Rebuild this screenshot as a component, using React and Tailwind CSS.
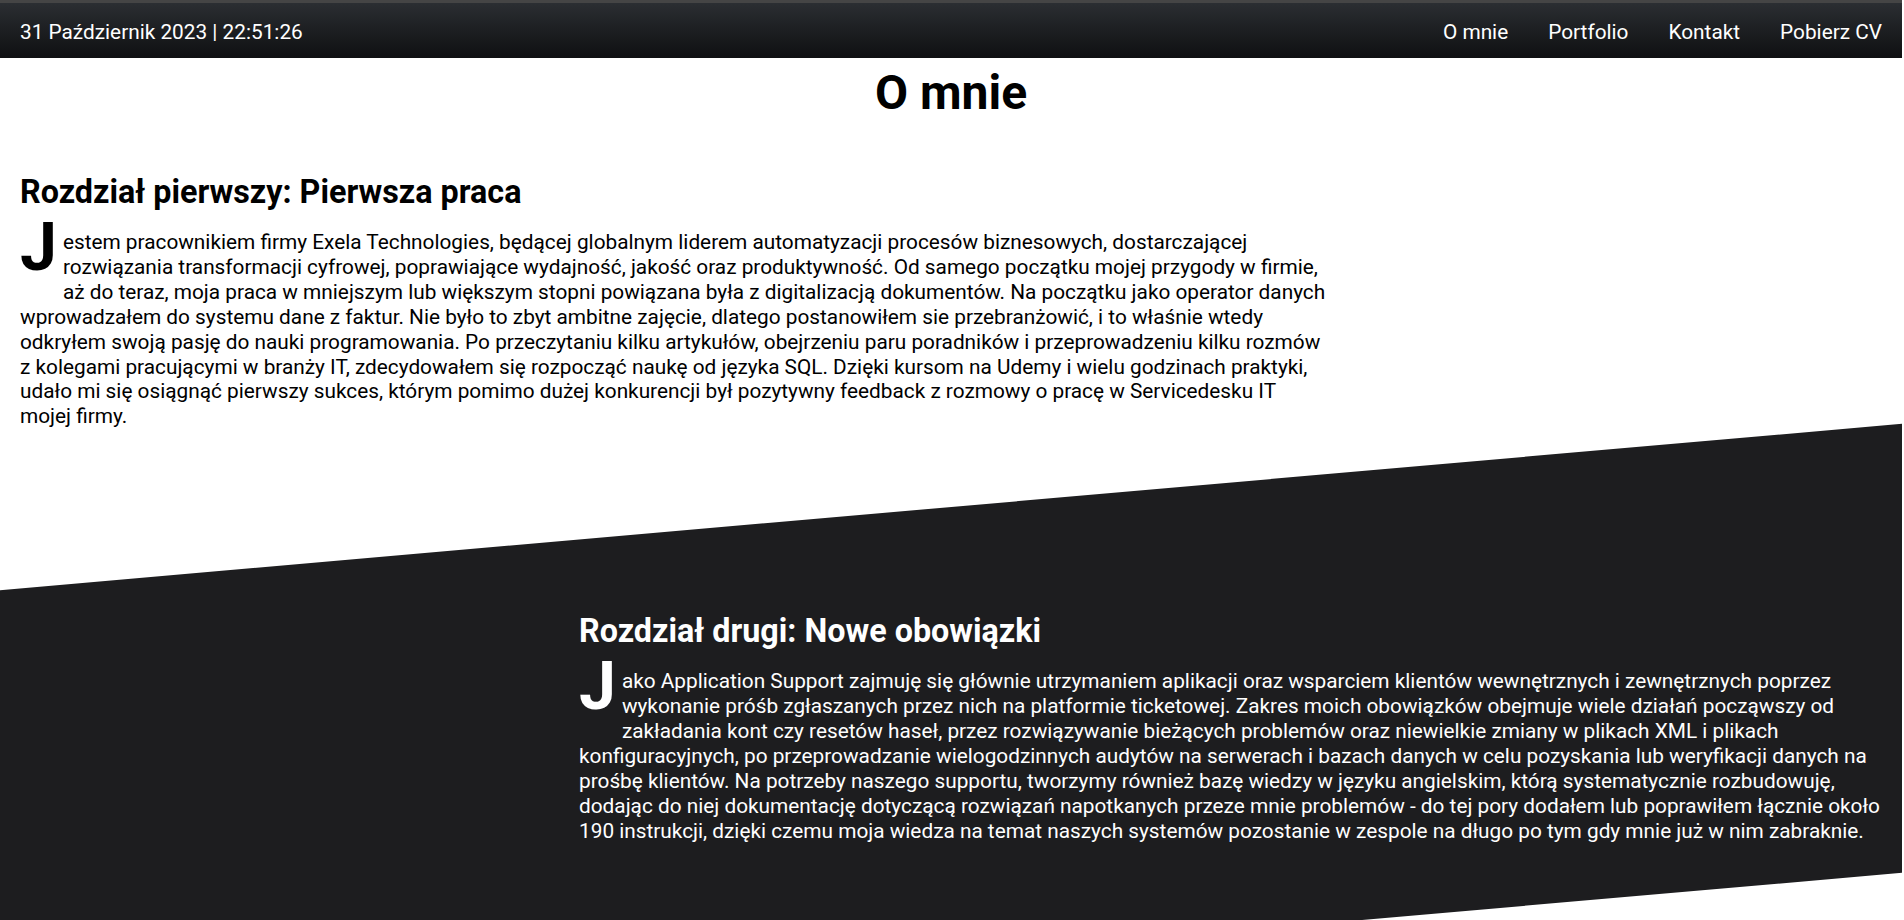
import React from 'react';

const links = ['O mnie', 'Portfolio', 'Kontakt', 'Pobierz CV'];

const DropCap = ({ letter }) => (
  <span className="float-left mr-[6px] pb-[20px] text-[66px] font-bold leading-[35px]">{letter}</span>
);

const Navbar = () => (
  <nav className="flex h-[58px] items-center justify-between border-t-[3px] border-[#454545] bg-linear-to-b from-[#2b2e32] to-[#0f1012] px-5 pt-[3px] text-[20.8px] leading-[28px] text-white">
    <span>31 Październik 2023 | 22:51:26</span>
    <ul className="flex gap-10">
      {links.map((link) => (
        <li key={link}>
          <a href="#">{link}</a>
        </li>
      ))}
    </ul>
  </nav>
);

const App = () => (
  <div className="mr-[2px] min-h-screen overflow-hidden bg-white font-[Roboto,sans-serif] text-black">
    <Navbar />
    <main>
      <h1 className="pt-[7px] text-center text-[48px] font-bold leading-[56px]">O mnie</h1>

      <section className="mt-[52px] pl-5">
        <h2 className="text-[32.3px] font-bold leading-[38px]">Rozdział pierwszy: Pierwsza praca</h2>
        <p className="mt-[19px] w-[1310px] text-[20.8px] leading-[24.9px]">
          <DropCap letter="J" />
          estem pracownikiem firmy Exela Technologies, będącej globalnym liderem automatyzacji procesów biznesowych,
          dostarczającej rozwiązania transformacji cyfrowej, poprawiające wydajność, jakość oraz produktywność. Od
          samego początku mojej przygody w firmie, aż do teraz, moja praca w mniejszym lub większym stopni powiązana
          była z digitalizacją dokumentów. Na początku jako operator danych wprowadzałem do systemu dane z faktur. Nie
          było to zbyt ambitne zajęcie, dlatego postanowiłem sie przebranżowić, i to właśnie wtedy odkryłem swoją pasję
          do nauki programowania. Po przeczytaniu kilku artykułów, obejrzeniu paru poradników i przeprowadzeniu kilku
          rozmów z kolegami pracującymi w branży IT, zdecydowałem się rozpocząć naukę od języka SQL. Dzięki kursom na
          Udemy i wielu godzinach praktyki, udało mi się osiągnąć pierwszy sukces, którym pomimo dużej konkurencji był
          pozytywny feedback z rozmowy o pracę w Servicedesku IT mojej firmy.
        </p>
      </section>

      <section className="relative mt-[78px] pb-[113px] pl-[579px] pt-[105px]">
        {/* skewed dark band behind the second chapter */}
        <div className="absolute inset-0 -skew-y-5 bg-[#1d1d1f]" />
        <div className="relative text-white">
          <h2 className="text-[32.3px] font-bold leading-[38px]">Rozdział drugi: Nowe obowiązki</h2>
          <p className="mt-[19px] w-[1310px] text-[20.8px] leading-[24.9px]">
            <DropCap letter="J" />
            ako Application Support zajmuję się głównie utrzymaniem aplikacji oraz wsparciem klientów wewnętrznych i
            zewnętrznych poprzez wykonanie próśb zgłaszanych przez nich na platformie ticketowej. Zakres moich
            obowiązków obejmuje wiele działań począwszy od zakładania kont czy resetów haseł, przez rozwiązywanie
            bieżących problemów oraz niewielkie zmiany w plikach XML i plikach
            <br />
            konfiguracyjnych, po przeprowadzanie wielogodzinnych audytów na serwerach i bazach danych w celu pozyskania
            lub weryfikacji danych na prośbę klientów. Na potrzeby naszego supportu, tworzymy również bazę wiedzy w
            języku angielskim, którą systematycznie rozbudowuję, dodając do niej dokumentację dotyczącą rozwiązań
            napotkanych przeze mnie problemów - do tej pory dodałem lub poprawiłem łącznie około 190 instrukcji, dzięki
            czemu moja wiedza na temat naszych systemów pozostanie w zespole na długo po tym gdy mnie już w nim
            zabraknie.
          </p>
        </div>
      </section>
    </main>
  </div>
);

export default App;
